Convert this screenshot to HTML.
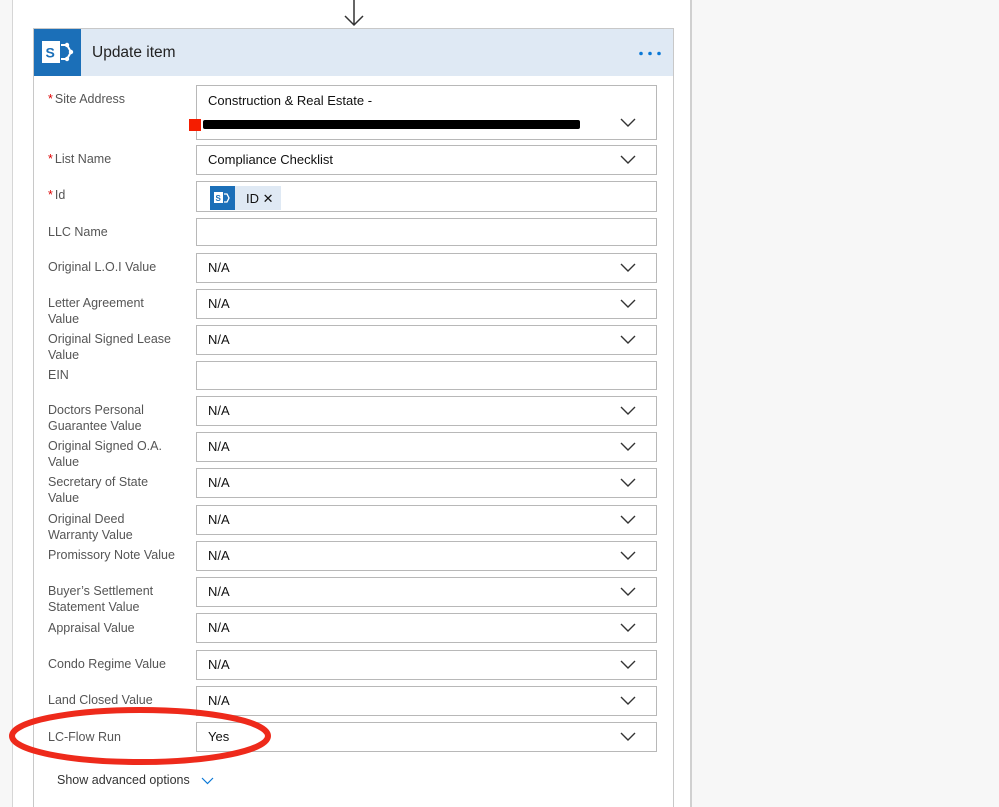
<!DOCTYPE html>
<html style="overflow:hidden"><head><meta charset="utf-8"><style>
*{margin:0;padding:0;box-sizing:border-box}
html,body{width:999px;height:807px;overflow:hidden}
body{background:#f7f7f7;font-family:"Liberation Sans",sans-serif;position:relative}
.panel{position:absolute;left:12px;top:0;width:680px;height:807px;background:#fff;border-left:1px solid #d6d6d6;border-right:2px solid #d0d0d0}
.card{position:absolute;left:33px;top:28px;width:641px;height:779px;border:1px solid #c8c8c8;border-bottom:none;background:#fff}
.hdr{position:absolute;left:0;top:0;width:639px;height:47px;background:#dfe9f4}
.ico{position:absolute;left:0;top:0;width:47px;height:47px;background:#1b6fb8}
.title{position:absolute;left:58px;top:15px;font-size:15.5px;color:#222}
.dots{position:absolute;right:12px;top:22px}
.lab{position:absolute;left:48px;font-size:12.5px;line-height:16px;color:#555;white-space:nowrap}
.lab b{color:#d00;font-weight:normal;margin-right:2px}
.box{position:absolute;left:196px;width:461px;border:1px solid #b8b8b8;background:#fff}
.val{position:absolute;left:11px;font-size:13px;color:#111}
.chev{position:absolute;right:20px}
</style></head><body>
<div class="panel"></div>
<svg style="position:absolute;left:342px;top:0" width="24" height="28"><path d="M12 0V25M3 16L12 25L21 16" stroke="#333" stroke-width="1.5" fill="none"/></svg>
<div class="card">
 <div class="hdr">
  <div class="ico"><svg width="47" height="47"><rect x="8" y="12" width="18" height="22" fill="#fff"/><text x="11.5" y="28.5" font-size="14" font-weight="bold" fill="#1b6fb8" font-family="Liberation Sans">S</text><path d="M27 16L33 16L37 23L33 30L27 30" stroke="#fff" stroke-width="2" fill="none"/><circle cx="33" cy="16" r="2.2" fill="#fff"/><circle cx="37" cy="23" r="2.2" fill="#fff"/><circle cx="33" cy="30" r="2.2" fill="#fff"/></svg></div>
  <div class="title">Update item</div>
  <svg class="dots" width="22" height="5"><circle cx="2" cy="2.5" r="1.8" fill="#0a78d6"/><circle cx="11" cy="2.5" r="1.8" fill="#0a78d6"/><circle cx="20" cy="2.5" r="1.8" fill="#0a78d6"/></svg>
 </div>
</div>

<div class="lab" style="top:91px"><b>*</b>Site Address</div>
<div class="box" style="top:85px;height:55px"><div class="val" style="top:7px">Construction &amp; Real Estate -</div>
<div style="position:absolute;left:6px;top:34px;width:377px;height:9px;background:#000;border-radius:2px"></div>
<svg class="chev" style="top:32px" width="16" height="10"><path d="M1 1L8 8L15 1" stroke="#333" stroke-width="1.4" fill="none"/></svg></div>
<div style="position:absolute;left:189px;top:119px;width:12px;height:12px;background:#f51d00"></div>

<div class="lab" style="top:151px"><b>*</b>List Name</div>
<div class="box" style="top:145px;height:30px"><div class="val" style="top:6px">Compliance Checklist</div><svg class="chev" style="top:9px" width="16" height="10"><path d="M1 1L8 8L15 1" stroke="#333" stroke-width="1.4" fill="none"/></svg></div>

<div class="lab" style="top:187px"><b>*</b>Id</div>
<div class="box" style="top:181px;height:31px">
 <div style="position:absolute;left:13px;top:4px;width:25px;height:24px;background:#1b6fb8"><svg width="25" height="24"><rect x="4" y="6" width="9" height="11" fill="#fff"/><text x="5.5" y="15" font-size="8" font-weight="bold" fill="#1b6fb8" font-family="Liberation Sans">S</text><path d="M14 8L17 8L19 12L17 16L14 16" stroke="#fff" stroke-width="1.3" fill="none"/></svg></div>
 <div style="position:absolute;left:38px;top:4px;width:46px;height:24px;background:#dfe9f4;font-size:13px;color:#111;padding:5px 0 0 11px">ID ✕</div>
</div>

<div class="lab" style="top:224px">LLC Name</div>
<div class="box" style="top:218px;height:28px"></div>

<div class="lab" style="top:259px">Original L.O.I Value</div>
<div class="box" style="top:253px;height:30px"><div class="val" style="top:6px">N/A</div><svg class="chev" style="top:9px" width="16" height="10"><path d="M1 1L8 8L15 1" stroke="#333" stroke-width="1.4" fill="none"/></svg></div>

<div class="lab" style="top:295px">Letter Agreement<br>Value</div>
<div class="box" style="top:289px;height:30px"><div class="val" style="top:6px">N/A</div><svg class="chev" style="top:9px" width="16" height="10"><path d="M1 1L8 8L15 1" stroke="#333" stroke-width="1.4" fill="none"/></svg></div>

<div class="lab" style="top:331px">Original Signed Lease<br>Value</div>
<div class="box" style="top:325px;height:30px"><div class="val" style="top:6px">N/A</div><svg class="chev" style="top:9px" width="16" height="10"><path d="M1 1L8 8L15 1" stroke="#333" stroke-width="1.4" fill="none"/></svg></div>

<div class="lab" style="top:367px">EIN</div>
<div class="box" style="top:361px;height:29px"></div>

<div class="lab" style="top:402px">Doctors Personal<br>Guarantee Value</div>
<div class="box" style="top:396px;height:30px"><div class="val" style="top:6px">N/A</div><svg class="chev" style="top:9px" width="16" height="10"><path d="M1 1L8 8L15 1" stroke="#333" stroke-width="1.4" fill="none"/></svg></div>

<div class="lab" style="top:438px">Original Signed O.A.<br>Value</div>
<div class="box" style="top:432px;height:30px"><div class="val" style="top:6px">N/A</div><svg class="chev" style="top:9px" width="16" height="10"><path d="M1 1L8 8L15 1" stroke="#333" stroke-width="1.4" fill="none"/></svg></div>

<div class="lab" style="top:474px">Secretary of State<br>Value</div>
<div class="box" style="top:468px;height:30px"><div class="val" style="top:6px">N/A</div><svg class="chev" style="top:9px" width="16" height="10"><path d="M1 1L8 8L15 1" stroke="#333" stroke-width="1.4" fill="none"/></svg></div>

<div class="lab" style="top:511px">Original Deed<br>Warranty Value</div>
<div class="box" style="top:505px;height:30px"><div class="val" style="top:6px">N/A</div><svg class="chev" style="top:9px" width="16" height="10"><path d="M1 1L8 8L15 1" stroke="#333" stroke-width="1.4" fill="none"/></svg></div>

<div class="lab" style="top:547px">Promissory Note Value</div>
<div class="box" style="top:541px;height:30px"><div class="val" style="top:6px">N/A</div><svg class="chev" style="top:9px" width="16" height="10"><path d="M1 1L8 8L15 1" stroke="#333" stroke-width="1.4" fill="none"/></svg></div>

<div class="lab" style="top:583px">Buyer’s Settlement<br>Statement Value</div>
<div class="box" style="top:577px;height:30px"><div class="val" style="top:6px">N/A</div><svg class="chev" style="top:9px" width="16" height="10"><path d="M1 1L8 8L15 1" stroke="#333" stroke-width="1.4" fill="none"/></svg></div>

<div class="lab" style="top:620px">Appraisal Value</div>
<div class="box" style="top:613px;height:30px"><div class="val" style="top:6px">N/A</div><svg class="chev" style="top:9px" width="16" height="10"><path d="M1 1L8 8L15 1" stroke="#333" stroke-width="1.4" fill="none"/></svg></div>

<div class="lab" style="top:656px">Condo Regime Value</div>
<div class="box" style="top:650px;height:30px"><div class="val" style="top:6px">N/A</div><svg class="chev" style="top:9px" width="16" height="10"><path d="M1 1L8 8L15 1" stroke="#333" stroke-width="1.4" fill="none"/></svg></div>

<div class="lab" style="top:692px">Land Closed Value</div>
<div class="box" style="top:686px;height:30px"><div class="val" style="top:6px">N/A</div><svg class="chev" style="top:9px" width="16" height="10"><path d="M1 1L8 8L15 1" stroke="#333" stroke-width="1.4" fill="none"/></svg></div>

<div class="lab" style="top:729px">LC-Flow Run</div>
<div class="box" style="top:722px;height:30px"><div class="val" style="top:6px">Yes</div><svg class="chev" style="top:9px" width="16" height="10"><path d="M1 1L8 8L15 1" stroke="#333" stroke-width="1.4" fill="none"/></svg></div>

<svg style="position:absolute;left:0;top:700px" width="280" height="70"><ellipse cx="140" cy="36" rx="128" ry="26" stroke="#ee2a1b" stroke-width="6" fill="none"/></svg>

<div style="position:absolute;left:57px;top:773px;font-size:12.5px;color:#333">Show advanced options</div>
<svg style="position:absolute;left:201px;top:777px" width="13" height="8"><path d="M1 1L6.5 6.5L12 1" stroke="#0a78d6" stroke-width="1.2" fill="none"/></svg>
</body></html>
